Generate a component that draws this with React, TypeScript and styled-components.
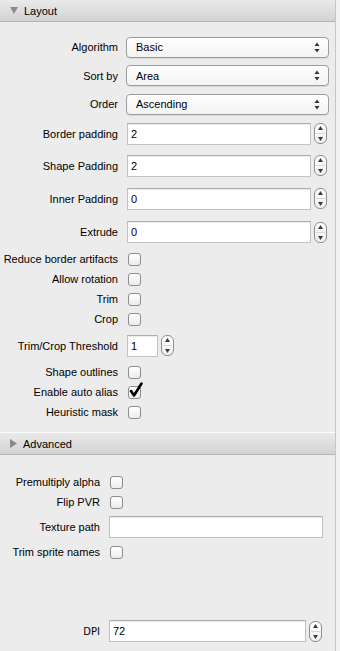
import styled, { createGlobalStyle } from "styled-components";

const GlobalStyle = createGlobalStyle`
  html, body {
    margin: 0;
    padding: 0;
    background: #ececec;
  }
  body {
    font-family: "Liberation Sans", Arial, sans-serif;
    font-size: 11px;
    color: #000;
  }
`;

interface FieldRow {
  label: string;
  kind: "select" | "number" | "check" | "text" | "small";
  value?: string;
  checked?: boolean;
  h: number;
}

const layoutRows: FieldRow[] = [
  { label: "Algorithm", kind: "select", value: "Basic", h: 28 },
  { label: "Sort by", kind: "select", value: "Area", h: 29 },
  { label: "Order", kind: "select", value: "Ascending", h: 28 },
  { label: "Border padding", kind: "number", value: "2", h: 31 },
  { label: "Shape Padding", kind: "number", value: "2", h: 33 },
  { label: "Inner Padding", kind: "number", value: "0", h: 33 },
  { label: "Extrude", kind: "number", value: "0", h: 34 },
  { label: "Reduce border artifacts", kind: "check", h: 20 },
  { label: "Allow rotation", kind: "check", h: 20 },
  { label: "Trim", kind: "check", h: 20 },
  { label: "Crop", kind: "check", h: 20 },
  { label: "Trim/Crop Threshold", kind: "small", value: "1", h: 33 },
  { label: "Shape outlines", kind: "check", h: 20 },
  { label: "Enable auto alias", kind: "check", checked: true, h: 20 },
  { label: "Heuristic mask", kind: "check", h: 20 },
];

const advancedRows: FieldRow[] = [
  { label: "Premultiply alpha", kind: "check", h: 20 },
  { label: "Flip PVR", kind: "check", h: 20 },
  { label: "Texture path", kind: "text", value: "", h: 30 },
  { label: "Trim sprite names", kind: "check", h: 20 },
];

function Control({ row, wide }: { row: FieldRow; wide: number }) {
  switch (row.kind) {
    case "select":
      return (
        <Select>
          <span>{row.value}</span>
          <svg width="6" height="11" viewBox="0 0 6 11">
            <path d="M3 0.5 L5.5 4 H0.5 Z" fill="#333" />
            <path d="M3 10.5 L5.5 7 H0.5 Z" fill="#333" />
          </svg>
        </Select>
      );
    case "number":
      return (
        <Field>
          <TextBox $w={wide}>{row.value}</TextBox>
          <Spinner />
        </Field>
      );
    case "small":
      return (
        <Field>
          <TextBox $w={31}>{row.value}</TextBox>
          <Spinner />
        </Field>
      );
    case "text":
      return <TextBox $w={214}>{row.value}</TextBox>;
    default:
      return <Checkbox checked={row.checked} />;
  }
}

function Spinner() {
  return (
    <Stepper>
      <svg width="13" height="21" viewBox="0 0 13 21">
        <path d="M6.5 3 L9 7 H4 Z" fill="#3a3a3a" />
        <line x1="2" y1="10.5" x2="11" y2="10.5" stroke="#d6d6d6" />
        <path d="M6.5 18 L9 14 H4 Z" fill="#3a3a3a" />
      </svg>
    </Stepper>
  );
}

function Checkbox({ checked }: { checked?: boolean }) {
  return (
    <Box>
      {checked && (
        <Tick width="14" height="16" viewBox="0 0 14 16">
          <path
            d="M2 9 L5 13.5 L12.5 1.5"
            fill="none"
            stroke="#000"
            strokeWidth="2.6"
            strokeLinecap="round"
            strokeLinejoin="round"
          />
        </Tick>
      )}
    </Box>
  );
}

export default function App() {
  return (
    <Window>
      <GlobalStyle />
      <Panel>
        <Header>
          <svg width="8" height="7" viewBox="0 0 8 7">
            <path d="M0 0 H8 L4 7 Z" fill="#8b8b8b" />
          </svg>
          Layout
        </Header>
        <Body $label={118} $top={11} $bottom={10}>
          {layoutRows.map((row) => (
            <Row key={row.label} $h={row.h}>
              <Label>{row.label}</Label>
              <Control row={row} wide={184} />
            </Row>
          ))}
        </Body>
        <Header $divider>
          <svg width="7" height="9" viewBox="0 0 7 9">
            <path d="M0 0 L7 4.5 L0 9 Z" fill="#8b8b8b" />
          </svg>
          Advanced
        </Header>
        <Body $label={100} $top={17} $bottom={0}>
          {advancedRows.map((row) => (
            <Row key={row.label} $h={row.h}>
              <Label>{row.label}</Label>
              <Control row={row} wide={197} />
            </Row>
          ))}
          <Spacer />
          <Row $h={30}>
            <Label $dpi>DPI</Label>
            <Field>
              <TextBox $w={197}>72</TextBox>
              <Spinner />
            </Field>
          </Row>
        </Body>
      </Panel>
      <Track />
    </Window>
  );
}

const Window = styled.div`
  display: flex;
  width: 340px;
  height: 651px;
  overflow: hidden;
  background: #ececec;
`;

const Panel = styled.div`
  width: 335px;
  display: flex;
  flex-direction: column;
`;

const Track = styled.div`
  flex: 1;
  border-left: 1px solid #c6c6c6;
  background: #f2f2f2;
`;

const Header = styled.div<{ $divider?: boolean }>`
  height: 21px;
  display: flex;
  align-items: center;
  gap: 6px;
  padding-left: 10px;
  background: linear-gradient(#eaeaea, #d2d2d2);
  border-top: ${(p) => (p.$divider ? "1px solid #fafafa" : "none")};
  border-bottom: 1px solid #b3b3b3;
  color: #000;
  font-size: 11px;
`;

const Body = styled.div<{ $label: number; $top: number; $bottom: number }>`
  --label: ${(p) => p.$label}px;
  display: flex;
  flex-direction: column;
  padding: ${(p) => p.$top}px 0 ${(p) => p.$bottom}px;
`;

const Row = styled.div<{ $h: number }>`
  display: grid;
  grid-template-columns: var(--label) 1fr;
  column-gap: 10px;
  align-items: center;
  height: ${(p) => p.$h}px;
`;

const Label = styled.label<{ $dpi?: boolean }>`
  text-align: right;
  white-space: nowrap;
  font-family: ${(p) =>
    p.$dpi ? '"DejaVu Sans", sans-serif' : '"Liberation Sans", Arial, sans-serif'};
  font-size: ${(p) => (p.$dpi ? "10px" : "11px")};
`;

const Select = styled.div`
  margin-left: -2px;
  width: 203px;
  height: 21px;
  box-sizing: border-box;
  display: flex;
  align-items: center;
  justify-content: space-between;
  padding: 0 8px 0 9px;
  border: 1px solid #9c9c9c;
  border-radius: 4px;
  background: linear-gradient(#ffffff, #f3f3f3);
  box-shadow: 0 1px 0 rgba(0, 0, 0, 0.08);
`;

const Field = styled.div`
  display: flex;
  align-items: center;
  gap: 3px;
`;

const TextBox = styled.div<{ $w: number }>`
  width: ${(p) => p.$w}px;
  height: 22px;
  box-sizing: border-box;
  display: flex;
  align-items: center;
  padding-left: 3px;
  margin-left: -1px;
  background: #fff;
  border: 1px solid #c2c2c2;
  border-top-color: #adadad;
  box-shadow: inset 0 1px 1px rgba(0, 0, 0, 0.08);
`;

const Stepper = styled.div`
  width: 13px;
  height: 21px;
  box-sizing: border-box;
  border: 1px solid #8e8e8e;
  border-radius: 6px;
  background: linear-gradient(#ffffff, #efefef);
  display: flex;
  align-items: center;
  justify-content: center;
  overflow: hidden;
  svg {
    flex: none;
  }
`;

const Box = styled.span`
  position: relative;
  display: block;
  width: 13px;
  height: 13px;
  box-sizing: border-box;
  border: 1px solid #8d8d8d;
  border-radius: 3px;
  background: linear-gradient(#ffffff, #ececec);
`;

const Tick = styled.svg`
  position: absolute;
  left: 0;
  top: -5px;
`;

const Spacer = styled.div`
  height: 54px;
`;
